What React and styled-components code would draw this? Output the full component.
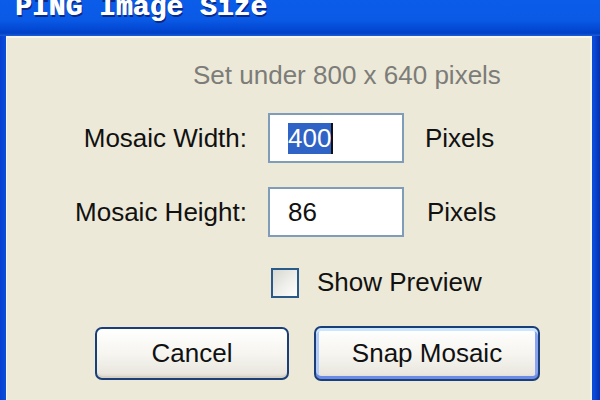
import React from 'react'
import styled, { createGlobalStyle } from 'styled-components'

const GlobalStyle = createGlobalStyle`
  html, body {
    margin: 0;
    padding: 0;
    width: 600px;
    height: 400px;
    overflow: hidden;
  }
  #root {
    height: 100%;
  }
`

const Window = styled.div`
  display: flex;
  flex-direction: column;
  height: 100%;
  background: #0a4fdc;
  font-family: "Liberation Sans", Arial, sans-serif;
`

const TitleBar = styled.div`
  height: 36px;
  flex-shrink: 0;
  display: flex;
  align-items: flex-start;
  padding-left: 15px;
  overflow: hidden;
  background: linear-gradient(
    to bottom,
    #0b5ce9 0%,
    #0a5ae6 55%,
    #0349d4 80%,
    #0040c6 92%,
    #1a5fd8 100%
  );
`

const Title = styled.div`
  margin-top: -6px;
  font-family: "Liberation Mono", "Courier New", monospace;
  font-weight: 700;
  font-size: 28px;
  line-height: 28px;
  color: #ffffff;
  text-shadow: 0.6px 0 0 #ffffff, 1.5px 1.5px 0 #0a2a8a;
  white-space: nowrap;
`

const Frame = styled.div`
  flex: 1;
  display: flex;
  padding: 0 8px 0 6px;
  background: linear-gradient(to right, #0840d0 0px, #0a4fdc 6px, #0a4fdc 590px, #0b4ad8 594px, #062fb0 600px);
`

const Body = styled.div`
  flex: 1;
  background: #ece9d8;
  border-top: 2px solid #f7f5ec;
  border-left: 1px solid #f7f5ec;
  border-right: 2px solid #f4f2e8;
  padding-top: 22px;
  display: flex;
  flex-direction: column;
`

const Hint = styled.div`
  margin-left: 186px;
  font-size: 26px;
  line-height: 30px;
  color: #7c7c78;
`

const FormGrid = styled.div`
  margin-top: 23px;
  display: grid;
  grid-template-columns: 240px 136px auto;
  column-gap: 21px;
  row-gap: 24px;
  align-items: center;
`

const Label = styled.div`
  font-size: 26px;
  color: #111;
  text-align: right;
`

const Unit = styled.div`
  font-size: 26px;
  color: #111;
  margin-left: ${p => p.$shift || 0}px;
`

const Field = styled.div`
  box-sizing: border-box;
  height: 50px;
  border: 2px solid #7f9db9;
  background: #ffffff;
  display: flex;
  align-items: center;
  padding-left: 18px;
  font-size: 26px;
  color: #111;
`

const Selected = styled.span`
  background: #2f63c6;
  color: #ffffff;
  line-height: 31px;
  border-right: 2px solid #111;
`

const CheckRow = styled.label`
  margin-top: 30px;
  margin-left: 264px;
  display: flex;
  align-items: center;
  gap: 18px;
  font-size: 26px;
  color: #111;
`

const Box = styled.span`
  box-sizing: border-box;
  width: 28px;
  height: 30px;
  border: 2px solid #2a5a8a;
  background: linear-gradient(135deg, #d8d8d2 0%, #efefeb 55%, #ffffff 100%);
`

const Buttons = styled.div`
  margin-top: 28px;
  margin-left: 88px;
  display: flex;
  gap: 25px;
  align-items: center;
`

const Button = styled.div`
  box-sizing: border-box;
  width: ${p => p.$w}px;
  height: ${p => p.$h}px;
  border: 2px solid #1a3f78;
  border-radius: 7px;
  background: linear-gradient(to bottom, #ffffff 0%, #f6f5f0 50%, #e9e7df 90%, #d8d5ca 100%);
  box-shadow: ${p => (p.$default
    ? 'inset 0 3px 0 #cde6ff, inset 0 -3px 0 #6c8ae8, inset 3px 0 0 #b3cdf8, inset -3px 0 0 #8aa5f0'
    : 'inset 0 -2px 0 #d6d0c4')};
  display: flex;
  align-items: center;
  justify-content: center;
  font-size: 26px;
  color: #111;
`

export default function App() {
  return (
    <>
      <GlobalStyle />
      <Window>
        <TitleBar>
          <Title>PING Image Size</Title>
        </TitleBar>
        <Frame>
          <Body>
            <Hint>Set under 800 x 640 pixels</Hint>
            <FormGrid>
              <Label>Mosaic Width:</Label>
              <Field>
                <Selected>400</Selected>
              </Field>
              <Unit>Pixels</Unit>
              <Label>Mosaic Height:</Label>
              <Field>86</Field>
              <Unit $shift={2}>Pixels</Unit>
            </FormGrid>
            <CheckRow>
              <Box />
              Show Preview
            </CheckRow>
            <Buttons>
              <Button $w={194} $h={53}>Cancel</Button>
              <Button $w={226} $h={55} $default>Snap Mosaic</Button>
            </Buttons>
          </Body>
        </Frame>
      </Window>
    </>
  )
}
